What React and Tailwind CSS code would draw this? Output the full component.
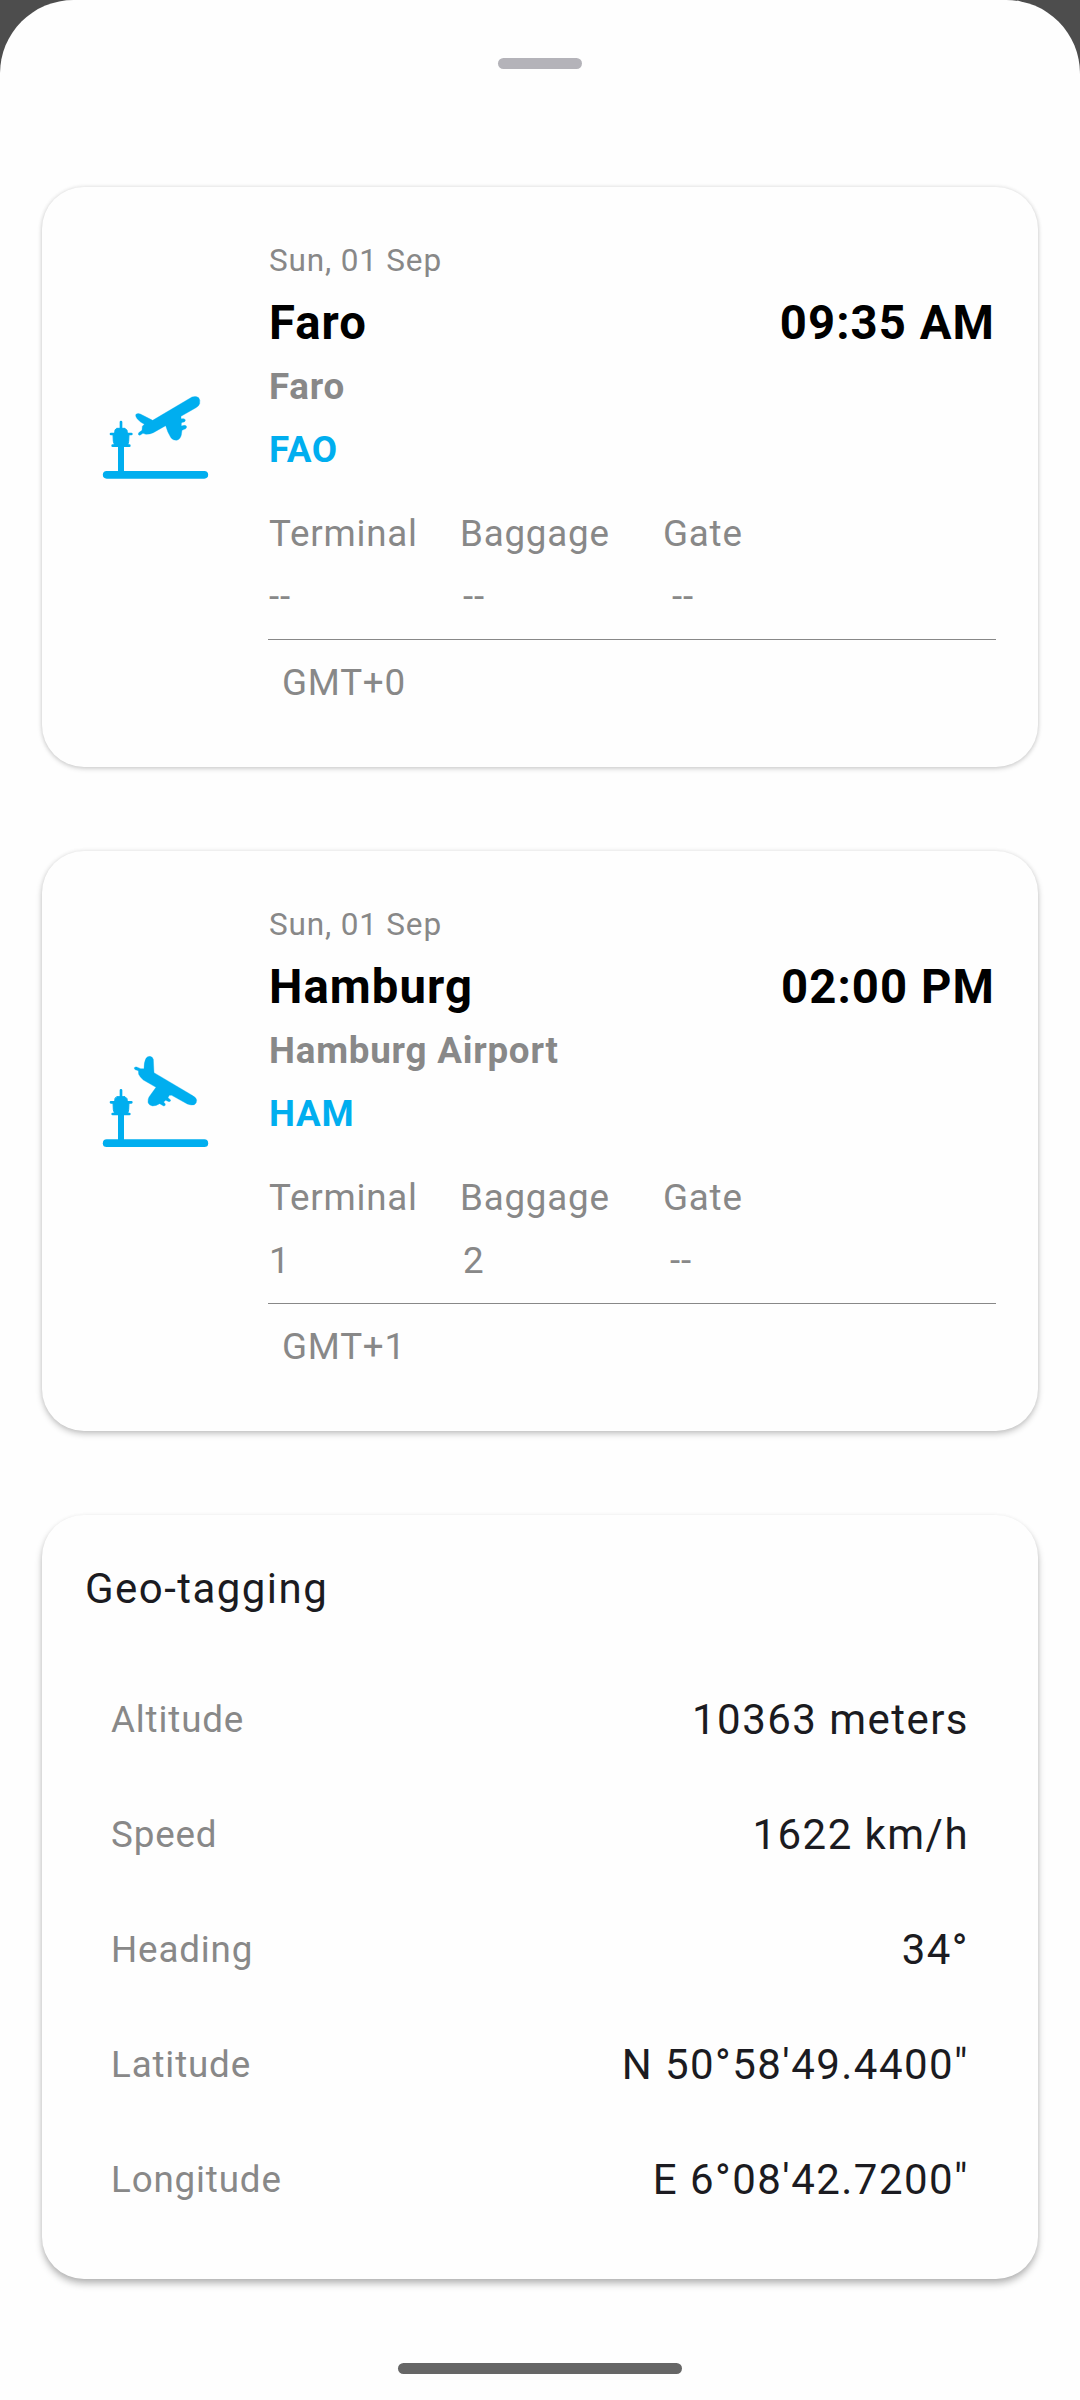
const Tower = () => (
  <g strokeLinecap="round" strokeLinejoin="round">
    <path strokeWidth="23" d="M50 284.500 H343" />
    <path strokeWidth="18" strokeLinecap="butt" d="M93 196 V280" />
    <path strokeWidth="8" d="M93 126 V150 M63 162 H124 M68 197 H118" />
    <path strokeWidth="3" d="M81 145 H105 L111 151 L112 160 L117 162 L116 184 L113 196 H74 L70 184 L69 162 L74 160 L75 151 Z" />
  </g>
);

const DepartIcon = () => (
  <svg className="block h-[120px] w-[130px]" viewBox="0 0 390 360" fill="#00aeef" stroke="#00aeef">
    <g transform="translate(0 12)">
      <Tower />
      <path strokeWidth="1" d="M306 51 Q318 47 326 53 Q332 60 329 71 Q326 79 318 83 L273 109 L273 116 L281 116 Q287 117 286 122 Q284 127 278 127 L274 129 L274 138 L283 136 Q290 136 290 141 Q289 147 283 148 L276 151 L274 165 Q270 180 259 181 Q247 181 242 172 Q233 158 227 137 L190 158 Q180 163 168 163 L159 160 L151 165 Q145 167 145 162 Q145 158 149 156 L156 151 L157 139 L163 133 Q152 128 142 117 Q134 106 139 102 Q144 99 151 102 L188 121 Z" />
    </g>
  </svg>
);

const ArriveIcon = () => (
  <svg className="block h-[120px] w-[130px]" viewBox="0 0 390 360" fill="#00aeef" stroke="#00aeef">
    <g transform="translate(0 25)">
      <Tower />
    </g>
    <path strokeWidth="1" d="M162 86 Q162 66 168 55 Q172 49 180 49 Q188 50 190 58 L192 98 L305 165 Q319 172 320 181 Q320 191 313 194 Q304 197 292 192 L245 166 L238 166 L234 173 L241 179 Q244 184 237 185 L227 181 L221 186 L226 192 Q227 198 221 198 L209 191 Q198 198 188 198 Q177 197 174 187 Q173 178 177 171 L198 142 L160 120 Q150 112 146 103 L145 92 L136 89 Q132 87 133 83 Q135 80 140 81 L152 86 Z" />
  </svg>
);

const flights = [
  { city: "Faro", airport: "Faro", code: "FAO", time: "09:35 AM", terminal: "--", baggage: "--", gate: "--", gatePad: "pl-[9px]", zone: "GMT+0", Icon: DepartIcon, shadow: "shadow-[0_2px_5px_rgba(0,0,0,0.15),0_0_4px_rgba(0,0,0,0.11)]" },
  { city: "Hamburg", airport: "Hamburg Airport", code: "HAM", time: "02:00 PM", terminal: "1", baggage: "2", gate: "--", gatePad: "pl-[7px]", zone: "GMT+1", Icon: ArriveIcon, shadow: "shadow-[0_3px_6px_rgba(0,0,0,0.22),0_0_4px_rgba(0,0,0,0.08)]" },
];

const position = [
  ["Altitude", "10363 meters"],
  ["Speed", "1622 km/h"],
  ["Heading", "34°"],
  ["Latitude", "N 50°58'49.4400\""],
  ["Longitude", "E 6°08'42.7200\""],
];

function FlightCard({ f }) {
  return (
    <section className={`flex h-[580px] rounded-[42px] bg-[#fefefe] pr-[42px] ${f.shadow}`}>
      <div className="w-[226px] shrink-0 pt-[189px] pl-12">
        <f.Icon />
      </div>
      <div className="flex-1 pt-[42px] text-[36.75px] leading-[63px] tracking-[0.78px] text-[#888888]">
        <p className="pl-px text-[31.5px] tracking-[0.83px]">Sun, 01 Sep</p>
        <div className="flex justify-between px-px text-[47.25px] font-bold tracking-[1.08px] text-black">
          <h2>{f.city}</h2>
          <span>{f.time}</span>
        </div>
        <p className="pl-px font-bold">{f.airport}</p>
        <p className="pl-px font-bold text-[#00aeef]">{f.code}</p>
        <div className="mt-[21px] grid grid-cols-[191px_203px_1fr] pl-px">
          <span>Terminal</span>
          <span>Baggage</span>
          <span>Gate</span>
          <span>{f.terminal}</span>
          <span className="pl-[3px]">{f.baggage}</span>
          <span className={f.gatePad}>{f.gate}</span>
        </div>
        <div className="mt-[11px] h-px bg-[#888888]" />
        <p className="mt-[11px] pl-[14px]">{f.zone}</p>
      </div>
    </section>
  );
}

export default function App() {
  return (
    <div className="h-[2400px] w-[1080px] overflow-hidden bg-[#4d4d4d] font-['Roboto',sans-serif]">
      <main className="flex h-full flex-col rounded-t-[73.5px] bg-[#fefefe] px-[42px] pt-[58px]">
        <div className="h-[11px] w-[84px] shrink-0 self-center rounded-full bg-[#b4b3b9]" />
        <div className="mt-[118px] flex flex-col gap-[84px]">
          {flights.map((f) => (
            <FlightCard key={f.code} f={f} />
          ))}
          <section className="h-[764px] rounded-[42px] bg-[#fefefe] p-[42px] text-[42px] leading-[63px] tracking-[1.46px] text-[#1b1b21] shadow-[0_5px_7px_rgba(0,0,0,0.25),0_1px_4px_rgba(0,0,0,0.08)]">
            <h3 className="pl-px">Geo-tagging</h3>
            <dl className="mt-[68px] flex flex-col gap-[52px] px-[27px]">
              {position.map(([label, value]) => (
                <div key={label} className="flex justify-between">
                  <dt className="text-[36.75px] tracking-[0.85px] text-[#888888]">{label}</dt>
                  <dd>{value}</dd>
                </div>
              ))}
            </dl>
          </section>
        </div>
        <div className="mt-[84px] h-[11px] w-[284px] shrink-0 self-center rounded-full bg-[#666666]" />
      </main>
    </div>
  );
}
